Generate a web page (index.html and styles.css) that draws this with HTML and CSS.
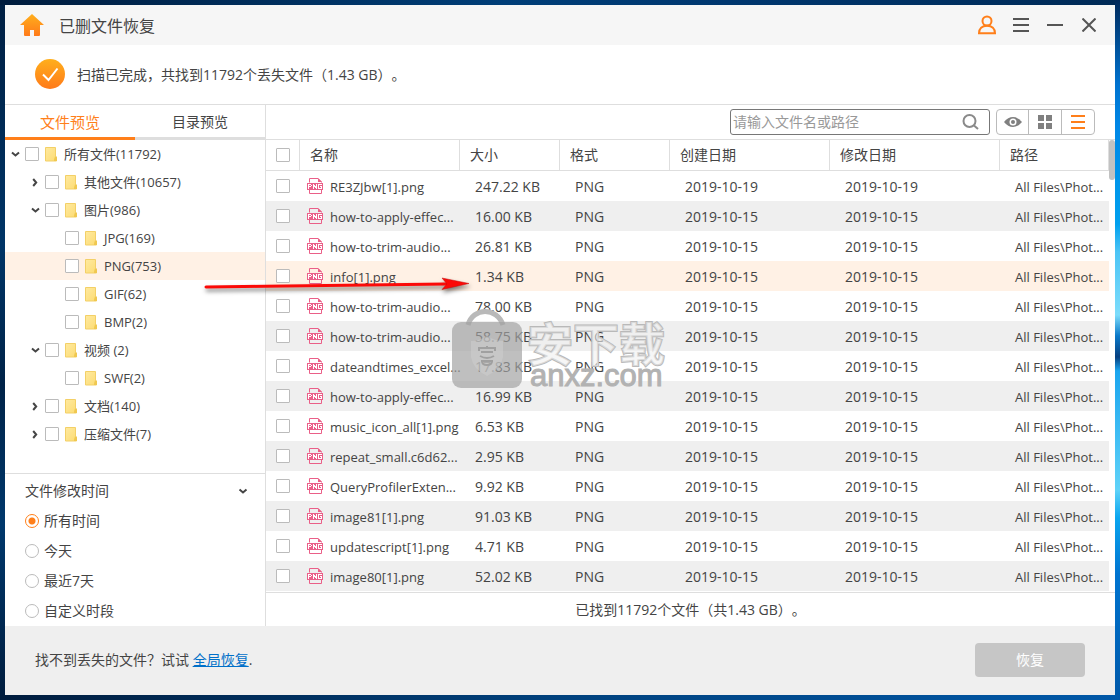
FILE: index.html
```html
<!DOCTYPE html>
<html lang="zh-CN">
<head>
<meta charset="utf-8">
<title>已删文件恢复</title>
<link rel="stylesheet" href="styles.css">
</head>
<body>
<svg class="defs" aria-hidden="true">
  <defs>
    <linearGradient id="orange" x1="0" y1="0" x2="0" y2="1"><stop offset="0" stop-color="#ffaf1c"/><stop offset="1" stop-color="#ff7a1a"/></linearGradient>
    <linearGradient id="yellow" x1="0" y1="0" x2="1" y2="1"><stop offset="0" stop-color="#ffeaa0"/><stop offset="1" stop-color="#fcdb72"/></linearGradient>
    <symbol id="folder" viewBox="0 0 13 15">
      <path d="M.5.5h10v9l1 1.500v3H.5z" fill="url(#yellow)" stroke="#f3d067"/>
      <path d="M10 9.500h2v4.500h-3v-1.500z" fill="#f0c850"/>
    </symbol>
    <symbol id="png" viewBox="0 0 16 16">
      <path d="M2.500 4.500v-4h8.500l3.500 3.500v.5M2.500 12v3.500h12V12" fill="none" stroke="#ea5f88"/>
      <path d="M11 0l4 4h-4z" fill="#ea5f88"/>
      <path d="M0 5h16v7H0z" fill="#ea5f88"/>
      <path d="M1 6h3v1h1v1H4v1H2v2H1zM2 7v1h2V7zM6 6h1v1h1v1h1V6h1v5H9v-1H8V9H7v2H6zM11 6h4v1h-3v3h2V9h-1V8h2v3h-4z" fill="#fff" fill-rule="evenodd"/>
    </symbol>
    <symbol id="down" viewBox="0 0 9 6"><path d="M1 1.500l3.500 3 3.500-3" fill="none" stroke="#454545" stroke-width="2"/></symbol>
    <symbol id="right" viewBox="0 0 6 9"><path d="M1.200 1l3 3.500-3 3.500" fill="none" stroke="#454545" stroke-width="2"/></symbol>
  </defs>
</svg>
<div class="window">
  <header class="titlebar">
    <svg class="home" width="24" height="24" viewBox="0 0 24 24" aria-hidden="true"><path d="M12 1l12 11h-4v10q0 1-1 1h-5v-6h-4v6H5q-1 0-1-1V12H0z" fill="url(#orange)"/></svg>
    <h1 class="title">已删文件恢复</h1>
    <div class="window-buttons">
      <button class="icon-button" aria-label="账户"><svg width="20" height="20" viewBox="0 0 20 20"><g fill="none" stroke="#ff7f1a" stroke-width="2"><circle cx="10" cy="6" r="4.500"/><path d="M2 18.200c0-4.500 3-7.500 8-7.500s8 3 8 7.500z"/></g></svg></button>
      <button class="icon-button" aria-label="菜单"><svg width="16" height="14" viewBox="0 0 16 14"><path d="M0 1h16M0 7h16M0 13h16" stroke="#555" stroke-width="2"/></svg></button>
      <button class="icon-button" aria-label="最小化"><svg width="16" height="14" viewBox="0 0 16 14"><path d="M0 7h16" stroke="#555" stroke-width="2"/></svg></button>
      <button class="icon-button" aria-label="关闭"><svg width="14" height="14" viewBox="0 0 14 14"><path d="M.5.5l13 13M13.500.5l-13 13" stroke="#555" stroke-width="2"/></svg></button>
    </div>
  </header>
  <section class="status">
    <svg width="30" height="30" viewBox="0 0 30 30" aria-hidden="true"><circle cx="15" cy="15" r="15" fill="url(#orange)"/><path d="M8 15.500l5.500 5.500L22.500 9.500" fill="none" stroke="#fff" stroke-width="2"/></svg>
    <p class="status-text">扫描已完成，共找到11792个丢失文件（1.43 GB）。</p>
  </section>
  <div class="content">
    <aside class="sidebar">
      <div class="tabs" role="tablist">
        <button class="tab active" role="tab" aria-selected="true">文件预览</button>
        <button class="tab" role="tab" aria-selected="false">目录预览</button>
      </div>
      <ul class="tree">
        <li class="node"><button class="toggle" aria-label="收起"><svg width="9" height="6"><use href="#down"/></svg></button><label class="node-label"><input type="checkbox" class="check"><svg width="13" height="15"><use href="#folder"/></svg>所有文件(11792)</label></li>
        <li class="node level-1"><button class="toggle" aria-label="展开"><svg width="6" height="9"><use href="#right"/></svg></button><label class="node-label"><input type="checkbox" class="check"><svg width="13" height="15"><use href="#folder"/></svg>其他文件(10657)</label></li>
        <li class="node level-1"><button class="toggle" aria-label="收起"><svg width="9" height="6"><use href="#down"/></svg></button><label class="node-label"><input type="checkbox" class="check"><svg width="13" height="15"><use href="#folder"/></svg>图片(986)</label></li>
        <li class="node level-2"><label class="node-label"><input type="checkbox" class="check"><svg width="13" height="15"><use href="#folder"/></svg>JPG(169)</label></li>
        <li class="node level-2 selected"><label class="node-label"><input type="checkbox" class="check"><svg width="13" height="15"><use href="#folder"/></svg>PNG(753)</label></li>
        <li class="node level-2"><label class="node-label"><input type="checkbox" class="check"><svg width="13" height="15"><use href="#folder"/></svg>GIF(62)</label></li>
        <li class="node level-2"><label class="node-label"><input type="checkbox" class="check"><svg width="13" height="15"><use href="#folder"/></svg>BMP(2)</label></li>
        <li class="node level-1"><button class="toggle" aria-label="收起"><svg width="9" height="6"><use href="#down"/></svg></button><label class="node-label"><input type="checkbox" class="check"><svg width="13" height="15"><use href="#folder"/></svg>视频 (2)</label></li>
        <li class="node level-2"><label class="node-label"><input type="checkbox" class="check"><svg width="13" height="15"><use href="#folder"/></svg>SWF(2)</label></li>
        <li class="node level-1"><button class="toggle" aria-label="展开"><svg width="6" height="9"><use href="#right"/></svg></button><label class="node-label"><input type="checkbox" class="check"><svg width="13" height="15"><use href="#folder"/></svg>文档(140)</label></li>
        <li class="node level-1"><button class="toggle" aria-label="展开"><svg width="6" height="9"><use href="#right"/></svg></button><label class="node-label"><input type="checkbox" class="check"><svg width="13" height="15"><use href="#folder"/></svg>压缩文件(7)</label></li>
      </ul>
      <div class="filter" role="radiogroup" aria-label="文件修改时间">
        <button class="filter-head">文件修改时间<svg width="10" height="6" viewBox="0 0 9 6"><use href="#down"/></svg></button>
        <label class="option"><input type="radio" name="time" class="radio" checked>所有时间</label>
        <label class="option"><input type="radio" name="time" class="radio">今天</label>
        <label class="option"><input type="radio" name="time" class="radio">最近7天</label>
        <label class="option"><input type="radio" name="time" class="radio">自定义时段</label>
      </div>
    </aside>
    <main class="files">
      <div class="toolbar">
        <div class="search">
          <input type="text" class="search-input" placeholder="请输入文件名或路径" aria-label="请输入文件名或路径">
          <button class="icon-button" aria-label="搜索"><svg width="18" height="16" viewBox="0 0 18 16"><circle cx="7.500" cy="7" r="6" fill="none" stroke="#8a8a8a" stroke-width="2"/><path d="M12 11.500l4 3.500" stroke="#8a8a8a" stroke-width="2"/></svg></button>
        </div>
        <div class="views">
          <button class="view" aria-label="预览"><svg width="18" height="12" viewBox="0 0 18 12"><path d="M0 6Q4 1 9 1t9 5q-4 5-9 5T0 6z" fill="#808080"/><circle cx="9" cy="6" r="3.500" fill="#fff"/><circle cx="9" cy="6" r="2" fill="#808080"/></svg></button>
          <button class="view" aria-label="网格"><svg width="14" height="14" viewBox="0 0 14 14"><path d="M0 0h6v6H0zM8 0h6v6H8zM0 8h6v6H0zM8 8h6v6H8z" fill="#808080"/></svg></button>
          <button class="view" aria-label="列表"><svg width="14" height="14" viewBox="0 0 14 14"><path d="M0 1h14M0 7h14M0 13h14" stroke="#ff7f1a" stroke-width="2"/></svg></button>
        </div>
      </div>
      <div class="list">
        <table class="table">
          <colgroup><col class="c-check"><col class="c-name"><col class="c-size"><col class="c-type"><col class="c-created"><col class="c-modified"><col></colgroup>
          <thead><tr><th><input type="checkbox" class="check" aria-label="全选"></th><th>名称</th><th>大小</th><th>格式</th><th>创建日期</th><th>修改日期</th><th>路径</th></tr></thead>
          <tbody>
            <tr><td><input type="checkbox" class="check" aria-label="RE3ZJbw[1].png"></td><td><span class="name"><svg width="16" height="16"><use href="#png"/></svg>RE3ZJbw[1].png</span></td><td>247.22 KB</td><td>PNG</td><td>2019-10-19</td><td>2019-10-19</td><td>All Files\Phot...</td></tr>
            <tr><td><input type="checkbox" class="check" aria-label="how-to-apply-effec..."></td><td><span class="name"><svg width="16" height="16"><use href="#png"/></svg>how-to-apply-effec...</span></td><td>16.00 KB</td><td>PNG</td><td>2019-10-15</td><td>2019-10-15</td><td>All Files\Phot...</td></tr>
            <tr><td><input type="checkbox" class="check" aria-label="how-to-trim-audio..."></td><td><span class="name"><svg width="16" height="16"><use href="#png"/></svg>how-to-trim-audio...</span></td><td>26.81 KB</td><td>PNG</td><td>2019-10-15</td><td>2019-10-15</td><td>All Files\Phot...</td></tr>
            <tr class="selected"><td><input type="checkbox" class="check" aria-label="info[1].png"></td><td><span class="name"><svg width="16" height="16"><use href="#png"/></svg>info[1].png</span></td><td>1.34 KB</td><td>PNG</td><td>2019-10-15</td><td>2019-10-15</td><td>All Files\Phot...</td></tr>
            <tr><td><input type="checkbox" class="check" aria-label="how-to-trim-audio..."></td><td><span class="name"><svg width="16" height="16"><use href="#png"/></svg>how-to-trim-audio...</span></td><td>78.00 KB</td><td>PNG</td><td>2019-10-15</td><td>2019-10-15</td><td>All Files\Phot...</td></tr>
            <tr><td><input type="checkbox" class="check" aria-label="how-to-trim-audio..."></td><td><span class="name"><svg width="16" height="16"><use href="#png"/></svg>how-to-trim-audio...</span></td><td>58.75 KB</td><td>PNG</td><td>2019-10-15</td><td>2019-10-15</td><td>All Files\Phot...</td></tr>
            <tr><td><input type="checkbox" class="check" aria-label="dateandtimes_excel..."></td><td><span class="name"><svg width="16" height="16"><use href="#png"/></svg>dateandtimes_excel...</span></td><td>17.83 KB</td><td>PNG</td><td>2019-10-15</td><td>2019-10-15</td><td>All Files\Phot...</td></tr>
            <tr><td><input type="checkbox" class="check" aria-label="how-to-apply-effec..."></td><td><span class="name"><svg width="16" height="16"><use href="#png"/></svg>how-to-apply-effec...</span></td><td>16.99 KB</td><td>PNG</td><td>2019-10-15</td><td>2019-10-15</td><td>All Files\Phot...</td></tr>
            <tr><td><input type="checkbox" class="check" aria-label="music_icon_all[1].png"></td><td><span class="name"><svg width="16" height="16"><use href="#png"/></svg>music_icon_all[1].png</span></td><td>6.53 KB</td><td>PNG</td><td>2019-10-15</td><td>2019-10-15</td><td>All Files\Phot...</td></tr>
            <tr><td><input type="checkbox" class="check" aria-label="repeat_small.c6d62..."></td><td><span class="name"><svg width="16" height="16"><use href="#png"/></svg>repeat_small.c6d62...</span></td><td>2.95 KB</td><td>PNG</td><td>2019-10-15</td><td>2019-10-15</td><td>All Files\Phot...</td></tr>
            <tr><td><input type="checkbox" class="check" aria-label="QueryProfilerExten..."></td><td><span class="name"><svg width="16" height="16"><use href="#png"/></svg>QueryProfilerExten...</span></td><td>9.92 KB</td><td>PNG</td><td>2019-10-15</td><td>2019-10-15</td><td>All Files\Phot...</td></tr>
            <tr><td><input type="checkbox" class="check" aria-label="image81[1].png"></td><td><span class="name"><svg width="16" height="16"><use href="#png"/></svg>image81[1].png</span></td><td>91.03 KB</td><td>PNG</td><td>2019-10-15</td><td>2019-10-15</td><td>All Files\Phot...</td></tr>
            <tr><td><input type="checkbox" class="check" aria-label="updatescript[1].png"></td><td><span class="name"><svg width="16" height="16"><use href="#png"/></svg>updatescript[1].png</span></td><td>4.71 KB</td><td>PNG</td><td>2019-10-15</td><td>2019-10-15</td><td>All Files\Phot...</td></tr>
            <tr><td><input type="checkbox" class="check" aria-label="image80[1].png"></td><td><span class="name"><svg width="16" height="16"><use href="#png"/></svg>image80[1].png</span></td><td>52.02 KB</td><td>PNG</td><td>2019-10-15</td><td>2019-10-15</td><td>All Files\Phot...</td></tr>
          </tbody>
        </table>
        <div class="scrollbar"><div class="thumb"></div></div>
      </div>
      <p class="summary">已找到11792个文件（共1.43 GB）。</p>
    </main>
  </div>
  <footer class="footer">
    <p>找不到丢失的文件？试试 <a class="link" href="#all">全局恢复</a>.</p>
    <button class="recover" disabled>恢复</button>
  </footer>
  <svg class="arrow" width="270" height="22" viewBox="0 0 270 22" aria-hidden="true">
    <path d="M3 12L243 9" stroke="#fb0a08" stroke-width="3" stroke-linecap="round"/>
    <path d="M266 8.500L239 3l5 6-5 5.500z" fill="#fb0a08" stroke="#c50d0d" stroke-width=".5"/>
  </svg>
  <svg class="watermark" width="230" height="96" viewBox="0 0 230 96" aria-hidden="true">
    <path d="M18 17C23-1 47-1 53 17" fill="none" stroke="#b9b9b9" stroke-width="5"/>
    <rect x="2" y="14" width="70" height="66" rx="9" fill="#a0a0a0" fill-opacity=".68"/>
    <path d="M37 28q8 5 16 5v16q-2 12-16 19-14-7-16-19V33q8 0 16-5z" fill="#d0d0d0" fill-opacity=".5"/>
    <path d="M29 43v-3h16v3M37 38v2M31 44h12M30 48q7 4 14 0M31 53h12M32 53q0 4 5 4t5-4" fill="none" stroke="#a0a0a0" stroke-width="2"/>
    <text class="mark-cn" x="77" y="53">安下载</text>
    <text class="mark-en" x="80" y="78">anxz.com</text>
  </svg>
</div>
</body>
</html>
```
FILE: styles.css
```css
* { box-sizing: border-box; }

body {
  margin: 0;
  min-height: 100vh;
  padding: 5px;
  display: flex;
  color: #444;
  font: 14px/20px "Open Sans", "Noto Sans CJK SC", sans-serif;
  text-spacing-trim: space-all;
  background:
    linear-gradient(#00295a, #0072cf 12%, #0087e6 18%, #00a0ee 32%, #4cc4f5 36%, #7cdcfb 45%, #0a78c8 48%, #063f80 51%, #1ba5ee 53%, #5fd2f8 70%, #0aa5ef 74%, #0074d0 82%, #0058a8) right / 5px 100% no-repeat,
    linear-gradient(90deg, #001c3d, #003e78 45%, #00376f 65%, #002a56) top / 100% 5px no-repeat,
    linear-gradient(90deg, #001c3d, #00417d 50%, #0058a8) bottom / 100% 5px no-repeat,
    linear-gradient(#001f42, #003567 35%, #002348 55%, #00386c 75%, #001c3d) #002348;
}

h1, p, ul { margin: 0; padding: 0; font-weight: 400; }
button, input { font: inherit; color: inherit; }
button { padding: 0; border: 0; background: none; }
svg { display: block; flex: none; }
.defs { position: absolute; width: 0; height: 0; }

.window {
  position: relative;
  flex: 1;
  min-width: 0;
  display: flex;
  flex-direction: column;
  background: #fff;
}

.titlebar {
  display: flex;
  align-items: center;
  height: 40px;
  padding: 0 16px 0 15px;
  background: #f6f6f6;
}
.title { margin-left: 15px; padding-top: 2px; font-size: 16px; }
.window-buttons { display: flex; gap: 14px; margin-left: auto; }
.icon-button {
  display: flex;
  align-items: center;
  justify-content: center;
  width: 20px;
  height: 20px;
}

.status {
  display: flex;
  align-items: center;
  gap: 12px;
  height: 60px;
  padding: 0 0 2px 30px;
  border-bottom: 1px solid #dedede;
}
.status-text { padding-top: 2px; }

.content { flex: 1; display: flex; }

.sidebar {
  width: 261px;
  flex: none;
  display: flex;
  flex-direction: column;
  border-right: 1px solid #dedede;
}
.tabs { display: flex; height: 35px; }
.tab { flex: 1; padding-top: 2px; border-bottom: 3px solid #dedede; }
.tab.active { border-color: #ff7f1a; color: #ff7f1a; font-size: 15px; }

.tree { flex: 1; list-style: none; font-size: 13px; }
.node { display: flex; height: 28px; }
.level-1 { padding-left: 20px; }
.level-2 { padding-left: 60px; }
.selected { background: #fff1e5; }
.toggle { display: flex; width: 20px; align-items: center; justify-content: center; }
.node-label { display: flex; flex: 1; align-items: center; gap: 6px; }

.check, .radio {
  appearance: none;
  flex: none;
  display: block;
  width: 14px;
  height: 14px;
  margin: 0;
  border: 1px solid #bbb;
  border-radius: 1px;
  background: #fff;
}
.radio { border-radius: 50%; }
.radio:checked {
  border-color: #ff7f1a;
  background: radial-gradient(circle, #ff7f1a 3px, #fff 4px);
}

.filter { padding: 2px 17px 0 20px; border-top: 1px solid #dedede; }
.filter-head {
  display: flex;
  align-items: center;
  justify-content: space-between;
  width: 100%;
  height: 30px;
}
.option { display: flex; align-items: center; gap: 5px; height: 30px; }

.files { flex: 1; min-width: 0; display: flex; flex-direction: column; }
.toolbar {
  display: flex;
  align-items: center;
  justify-content: flex-end;
  gap: 6px;
  height: 35px;
  padding-right: 20px;
  border-bottom: 1px solid #dedede;
}
.search {
  display: flex;
  align-items: center;
  width: 260px;
  height: 26px;
  padding: 0 8px 0 2px;
  border: 1px solid #777;
  border-radius: 3px;
}
.search-input { flex: 1; min-width: 0; padding: 0; border: 0; outline: 0; background: none; }
.search-input::placeholder { color: #999; }
.views { display: flex; height: 26px; border: 1px solid #bbb; border-radius: 4px; }
.view { display: flex; width: 31px; align-items: center; justify-content: center; }
.view + .view { width: 33px; border-left: 1px solid #bbb; }

.list { flex: 1; display: flex; align-items: flex-start; }
.table {
  flex: 1;
  width: 100%;
  min-width: 0;
  table-layout: fixed;
  border-collapse: separate;
  border-spacing: 0;
}
.c-check { width: 34px; }
.c-name, .c-created { width: 160px; }
.c-size { width: 100px; }
.c-type { width: 110px; }
.c-modified { width: 170px; }
.table th {
  height: 31px;
  padding: 0 9px 0 10px;
  border-right: 1px solid #dedede;
  border-bottom: 1px solid #dedede;
  text-align: left;
  font-weight: 400;
}
.table td { height: 30px; padding: 2px 0 0 15px; white-space: nowrap; }
.table td:first-child { padding: 0 10px; }
.table td:nth-child(2) { padding-left: 7px; font-size: 13px; }
.table td:last-child { font-size: 13px; }
.table tbody tr:nth-child(even):not(.selected) { background: #efefef; }
.name { display: flex; align-items: center; gap: 7px; }
.name svg { margin-bottom: 2px; }
.scrollbar { width: 6px; flex: none; }
.thumb { height: 40px; border-radius: 3px; background: #c2c2c2; }

.summary { height: 34px; line-height: 33px; border-top: 1px solid #dedede; text-align: center; }

.footer {
  display: flex;
  align-items: center;
  justify-content: space-between;
  height: 69px;
  padding: 0 30px 2px;
  background: #efefef;
}
.link { color: #0070c9; }
.recover { width: 110px; height: 34px; border-radius: 4px; background: #c6c6c6; color: #fff; }

.arrow, .watermark { position: absolute; pointer-events: none; }
.arrow { left: 198px; top: 270px; filter: drop-shadow(1px 3px 2px rgb(0 0 0 / 50%)); }
.watermark { left: 445px; top: 303px; }
.mark-cn {
  font: 700 46px "Noto Sans CJK SC", sans-serif;
  fill: rgb(240 240 240 / 60%);
  stroke: #b9b9b9;
  stroke-width: 2px;
  paint-order: stroke;
}
.mark-en {
  font: 31px "Liberation Sans", sans-serif;
  fill: #b2b2b2;
  stroke: #b2b2b2;
  stroke-width: 1px;
}
```
